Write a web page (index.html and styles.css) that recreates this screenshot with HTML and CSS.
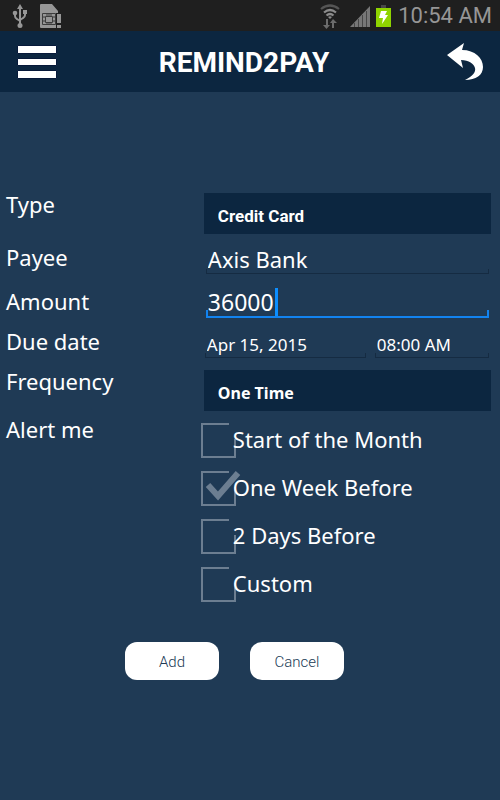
FILE: index.html
```html
<!DOCTYPE html>
<html lang="en">
<head>
<meta charset="utf-8">
<meta name="viewport" content="width=device-width, initial-scale=1">
<title>REMIND2PAY</title>
<link rel="stylesheet" href="styles.css">
</head>
<body>
<div class="status">
  <div class="status-group status-left">
    <svg width="16" height="26" viewBox="0 0 16 26" aria-hidden="true">
      <g fill="none" stroke="#969696" stroke-width="2"><path d="M8 4v18M3 10v3q0 2 2 3l3 2M13 9v3q0 2-2 3l-3 2"/></g>
      <g fill="#969696"><path d="M8 1l3 5H5z"/><circle cx="3" cy="10" r="2.3"/><path d="M11 7h4v4h-4z"/><circle cx="8" cy="22.500" r="2.500"/></g>
    </svg>
    <svg width="22" height="26" viewBox="0 0 22 26" aria-hidden="true">
      <path fill="#969696" d="M1 1h11l6 7v2h-2v15H1q-1 0-1-1V2q0-1 1-1z"/>
      <g fill="none" stroke="#3c3c3c"><path d="M2.500 10.500h13v11h-13zM5.500 13.500h7v6h-7zM7 10v3M9 10v3M11 10v3M7 20v2M9 20v2M11 20v2M3 14h2M3 18h2M13 14h2M13 18h2"/></g>
      <path fill="#969696" d="M17 11h4v9h-4zM17 22h4v3h-4z"/>
    </svg>
  </div>
  <div class="status-group status-right">
    <svg width="20" height="26" viewBox="0 0 20 26" aria-hidden="true">
      <g fill="none" stroke-width="2.200"><path stroke="#555" d="M1 6q9-7 18 0"/><path stroke="#8c8c8c" d="M4 9.500q6-5 12 0M6.500 12.500q3.500-3 7 0"/></g>
      <path fill="#8c8c8c" d="M8 14q2-1.500 4 0l-2 2z"/>
      <path fill="#6c6c6c" d="M6 16h2v6h2l-3.500 4L3 22h3zM12 25h2v-5h3l-4-4-3 4h2z"/>
    </svg>
    <svg width="20" height="26" viewBox="0 0 20 26" aria-hidden="true">
      <path fill="#777" d="M0 24L20 3v21z"/><path stroke="#474747" d="M4.500 20v4M8.500 16v8M12.500 12v12M16.500 8v16"/>
    </svg>
    <svg width="15" height="26" viewBox="0 0 15 26" aria-hidden="true">
      <path fill="#484848" d="M5 2h5v3H5z"/><path fill="#8fd400" d="M0 5h15v19H0z"/><path fill="#fff" d="M5 8h6l-2 4h3L6 21l1-6H3z"/>
    </svg>
    <span>10:54 AM</span>
  </div>
</div>
<header class="header">
  <button class="icon-button" type="button" aria-label="Menu">
    <svg width="40" height="34" viewBox="0 0 40 34" aria-hidden="true"><path fill="#fff" stroke="#07193a" d="M.5.500h39v8H.5zM.5 13.500h39v7H.5zM.5 25.500h39v8H.5z"/></svg>
  </button>
  <h1 class="title">REMIND2PAY</h1>
  <button class="icon-button" type="button" aria-label="Back">
    <svg width="36" height="38" viewBox="0 0 36 38" aria-hidden="true"><path fill="#fff" d="M0 12L17 0l-2 7c13 0 21 8 21 17 0 8-7 13-18 13 8-4 11-8 10-12-1-4-6-8-14-8l2 8z"/></svg>
  </button>
</header>
<form class="form">
  <div class="row">
    <label class="label" for="type">Type</label>
    <select class="select select-type" id="type"><option>Credit Card</option></select>
  </div>
  <div class="row">
    <label class="label" for="payee">Payee</label>
    <div class="field"><input class="input" id="payee" type="text" value="Axis Bank"></div>
  </div>
  <div class="row">
    <label class="label label-mid" for="amount">Amount</label>
    <div class="field field-active"><input class="input" id="amount" type="text" value="36000"><span class="caret"></span></div>
  </div>
  <div class="row">
    <label class="label" for="date">Due date</label>
    <div class="pair">
      <div class="field field-small"><input class="input" id="date" type="text" value="Apr 15, 2015"></div>
      <div class="field field-small"><input class="input" type="text" aria-label="Due time" value="08:00 AM"></div>
    </div>
  </div>
  <div class="row">
    <label class="label" for="frequency">Frequency</label>
    <select class="select" id="frequency"><option>One Time</option></select>
  </div>
  <div class="row alerts" role="group" aria-labelledby="alert">
    <span class="label" id="alert">Alert me</span>
    <div class="checks">
      <label class="check"><input type="checkbox"><svg viewBox="0 0 40 40" aria-hidden="true"><path class="box" d="M28 4H1v33h33V19"/><path class="tick" d="M7 17l10 11L37 5"/></svg><span>Start of the Month</span></label>
      <label class="check"><input type="checkbox" checked><svg viewBox="0 0 40 40" aria-hidden="true"><path class="box" d="M28 4H1v33h33V19"/><path class="tick" d="M7 17l10 11L37 5"/></svg><span>One Week Before</span></label>
      <label class="check"><input type="checkbox"><svg viewBox="0 0 40 40" aria-hidden="true"><path class="box" d="M28 4H1v33h33V19"/><path class="tick" d="M7 17l10 11L37 5"/></svg><span>2 Days Before</span></label>
      <label class="check"><input type="checkbox"><svg viewBox="0 0 40 40" aria-hidden="true"><path class="box" d="M28 4H1v33h33V19"/><path class="tick" d="M7 17l10 11L37 5"/></svg><span>Custom</span></label>
    </div>
  </div>
  <div class="actions">
    <button class="button" type="button">Add</button>
    <button class="button" type="button">Cancel</button>
  </div>
</form>
</body>
</html>
```
FILE: styles.css
```css
* { box-sizing: border-box; }
body {
  margin: 0;
  min-height: 100vh;
  background: #1f3a55;
  color: #fff;
  font-family: "Noto Sans", sans-serif;
  font-size: 22px;
}
.status {
  display: flex;
  justify-content: space-between;
  align-items: center;
  height: 31px;
  padding: 0 8px 0 12px;
  background: #1f1f1f;
  color: #969696;
  font: 22px/31px Roboto, sans-serif;
}
.status-group { display: flex; align-items: center; }
.status-left { gap: 12px; }
.status-right { gap: 7px; }
.status-right svg:first-child { margin-right: 3px; }
.status-right svg:nth-child(2) { margin-right: -1px; }
.header {
  display: grid;
  grid-template-columns: 40px 1fr 40px;
  align-items: center;
  height: 61px;
  padding: 0 15px 0 17px;
  background: #0c2640;
}
.icon-button {
  display: flex;
  justify-content: center;
  padding: 0;
  border: 0;
  background: none;
}
.title {
  margin: 0;
  padding: 2px 14px 0 0;
  text-align: center;
  font: bold 28px/32px Roboto, sans-serif;
}
.form {
  display: flex;
  flex-direction: column;
  gap: 12px;
  padding: 101px 9px 24px 6px;
}
.row {
  display: grid;
  grid-template-columns: 41fr 59fr;
  align-items: start;
}
.row > * { min-width: 0; }
.row > :last-child:not(.field) { margin-left: -1px; }
.label { line-height: 23px; }
.label-mid { line-height: 31px; }
.select {
  appearance: none;
  height: 41px;
  padding: 4px 14px 0;
  border: 0;
  border-radius: 0;
  background: #0c2640;
  color: #fff;
  font: bold 16px "Noto Sans", sans-serif;
}
.select-type { font: bold 17px Roboto, sans-serif; }
.field {
  position: relative;
  height: 28px;
  margin: 0 2px 0 1px;
}
.field::after {
  content: "";
  position: absolute;
  right: 0;
  bottom: 0;
  left: 0;
  height: 4px;
  border: 1px solid #152b42;
  border-top: 0;
  pointer-events: none;
}
.input {
  display: block;
  width: 100%;
  height: 26px;
  padding: 0 2px;
  border: 0;
  outline: 0;
  background: none;
  color: #fff;
  font: 22px/26px "Noto Sans", sans-serif;
}
.field-active { height: 32px; }
.field-active .input { height: 31px; font-size: 23px; }
.field-active::after { height: 6px; border: 2px solid #1283f0; border-top: 0; }
.caret {
  position: absolute;
  top: 2px;
  left: 69px;
  width: 3px;
  height: 28px;
  background: #0c8eff;
}
.pair {
  display: grid;
  grid-template-columns: 164px 1fr;
  gap: 6px;
}
.field-small .input { height: 28px; font-size: 17px; }
.alerts { margin-top: -7px; }
.alerts .label { padding-top: 2px; }
.check {
  position: relative;
  display: flex;
  align-items: center;
  height: 48px;
  padding-left: 29px;
}
.check input {
  position: absolute;
  left: -2px;
  width: 34px;
  height: 34px;
  margin: 0;
  opacity: 0;
}
.check svg {
  position: absolute;
  left: -3px;
  width: 40px;
  height: 40px;
  fill: none;
  stroke: #6c7e91;
  pointer-events: none;
}
.box { stroke-width: 2; }
.tick { stroke-width: 6; visibility: hidden; }
input:checked + svg .tick { visibility: visible; }
.check span { position: relative; line-height: 28px; padding-bottom: 2px; }
.actions {
  display: flex;
  justify-content: center;
  gap: 31px;
  margin-top: 22px;
  padding-right: 28px;
}
.button {
  width: 94px;
  height: 38px;
  padding-top: 3px;
  border: 0;
  border-radius: 12px;
  background: #fff;
  color: #203a55;
  font: 300 15px Roboto, sans-serif;
}
```
